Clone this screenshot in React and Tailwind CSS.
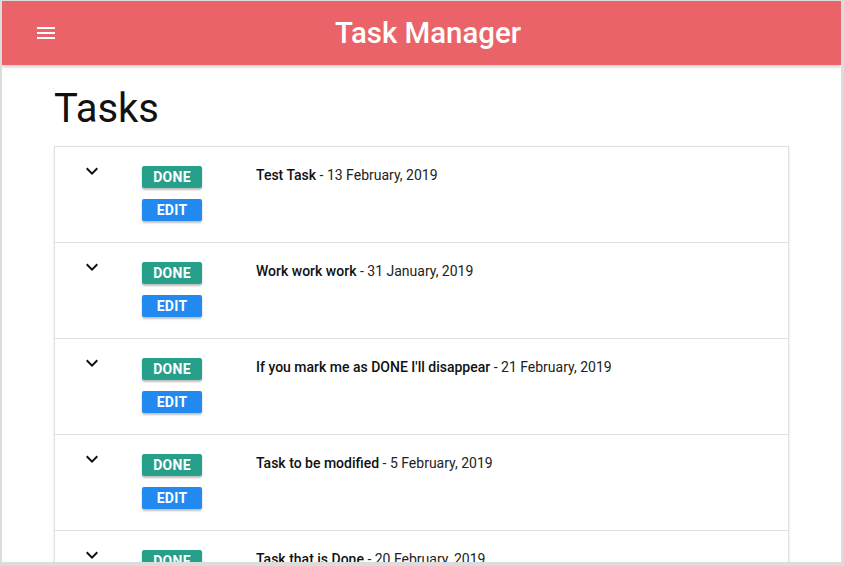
import React from "react";

const tasks = [
  { title: "Test Task", date: "13 February, 2019" },
  { title: "Work work work", date: "31 January, 2019" },
  { title: "If you mark me as DONE I'll disappear", date: "21 February, 2019" },
  { title: "Task to be modified", date: "5 February, 2019" },
  { title: "Task that is Done", date: "20 February, 2019" },
];

function Chevron() {
  return (
    <svg width="24" height="24" viewBox="0 0 24 24" className="shrink-0">
      <path d="M16.59 8.59L12 13.17 7.41 8.59 6 10l6 6 6-6z" fill="#111" />
    </svg>
  );
}

function Menu() {
  return (
    <svg width="24" height="24" viewBox="0 0 24 24">
      <path d="M3 18h18v-2H3v2zm0-5h18v-2H3v2zm0-7v2h18V6H3z" fill="#fff" />
    </svg>
  );
}

export default function App() {
  return (
    <div
      className="w-[844px] h-[566px] overflow-hidden bg-[#dcdcdc] pl-[2px] pt-[1px] pr-[3px] pb-[4px]"
      style={{ fontFamily: "Roboto, 'Noto Sans', sans-serif" }}
    >
      <div className="w-full h-full bg-white overflow-hidden flex flex-col">
        <header className="relative z-10 h-[64px] shrink-0 bg-[#ea6369] flex items-center shadow-[0_2px_3px_rgba(0,0,0,0.2)]">
          <div className="pl-[32px] flex items-center">
            <Menu />
          </div>
          <div className="absolute inset-0 flex items-center justify-center text-white text-[29.4px] font-medium pl-[13px]">
            Task Manager
          </div>
        </header>
        <main className="px-[52px] flex-1">
          <h1 className="text-[40px] leading-[44px] text-[#111] mt-[22px] mb-[15px]">Tasks</h1>
          <div className="border border-[#e0e0e0] shadow-[0_1px_2px_rgba(0,0,0,0.12)]">
            {tasks.map((t, i) => (
              <div
                key={i}
                className="h-[96px] border-b border-[#e0e0e0] flex items-start pt-[12px] pl-[25px]"
              >
                <Chevron />
                <div className="ml-[38px] mt-[7px] flex flex-col gap-[11px] w-[60px] shrink-0">
                  <button className="h-[22px] w-[60px] bg-[#26a08a] text-white text-[14px] font-bold tracking-[0.3px] rounded-[2px] shadow-[0_2px_2px_rgba(0,0,0,0.25)] flex items-center justify-center">
                    DONE
                  </button>
                  <button className="h-[22px] w-[60px] bg-[#2289f0] text-white text-[14px] font-bold tracking-[0.3px] rounded-[2px] shadow-[0_2px_2px_rgba(0,0,0,0.25)] flex items-center justify-center">
                    EDIT
                  </button>
                </div>
                <div className="ml-[54px] mt-[6px] text-[14px] leading-[20px] text-[#222]">
                  <span className="font-medium text-[#111]">{t.title}</span> - {t.date}
                </div>
              </div>
            ))}
          </div>
        </main>
      </div>
    </div>
  );
}
